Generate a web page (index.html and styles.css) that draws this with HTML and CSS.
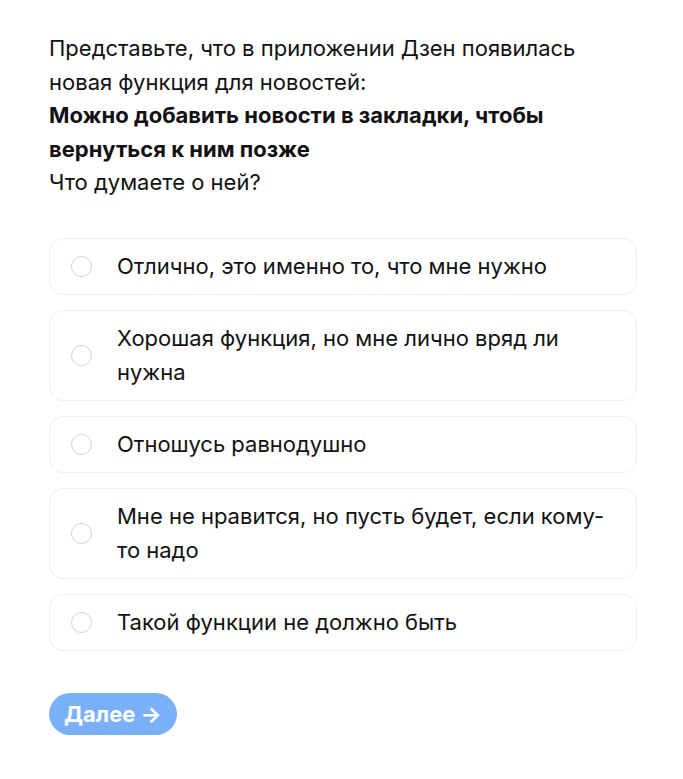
FILE: index.html
```html
<!DOCTYPE html>
<html lang="ru">
<head>
<meta charset="utf-8">
<link rel="stylesheet" href="styles.css">
</head>
<body>
<div class="page">
  <div class="question">
    <p>Представьте, что в приложении Дзен появилась новая функция для новостей:</p>
    <p class="bold">Можно добавить новости в закладки, чтобы вернуться к ним позже</p>
    <p>Что думаете о ней?</p>
  </div>
  <div class="options">
    <label class="option"><span class="radio"></span><span class="text">Отлично, это именно то, что мне нужно</span></label>
    <label class="option"><span class="radio"></span><span class="text">Хорошая функция, но мне лично вряд ли нужна</span></label>
    <label class="option"><span class="radio"></span><span class="text">Отношусь равнодушно</span></label>
    <label class="option"><span class="radio"></span><span class="text">Мне не нравится, но пусть будет, если кому-то надо</span></label>
    <label class="option"><span class="radio"></span><span class="text">Такой функции не должно быть</span></label>
  </div>
  <button class="next">Далее →</button>
</div>
</body>
</html>
```
FILE: styles.css
```css
html, body {
  margin: 0;
  padding: 0;
  background: #ffffff;
}
body {
  font-family: Inter, "Noto Sans", sans-serif;
  color: #111111;
}
.page {
  padding: 32px 46px 40px 49px;
  display: flex;
  flex-direction: column;
  align-items: flex-start;
}
.question {
  font-size: 22px;
  line-height: 33.5px;
  width: 560px;
}
.question p {
  margin: 0;
}
.question .bold {
  font-weight: 700;
}
.options {
  margin-top: 38px;
  display: flex;
  flex-direction: column;
  gap: 15px;
  width: 588px;
}
.option {
  display: flex;
  align-items: center;
  border: 1px solid #efefef;
  border-radius: 14px;
  padding: 10.5px 20px 10.5px 21px;
  font-size: 22px;
  line-height: 34px;
}
.radio {
  flex: none;
  width: 19px;
  height: 19px;
  border: 1px solid #d2d2d2;
  border-radius: 50%;
  margin-right: 25px;
}
.text {
  flex: 1;
}
.next {
  margin-top: 42px;
  height: 42px;
  padding: 0 15px;
  border: none;
  border-radius: 21px;
  background: #7ab0f7;
  color: #ffffff;
  font-family: Inter, "Noto Sans", sans-serif;
  font-size: 22px;
  font-weight: 700;
}
```
